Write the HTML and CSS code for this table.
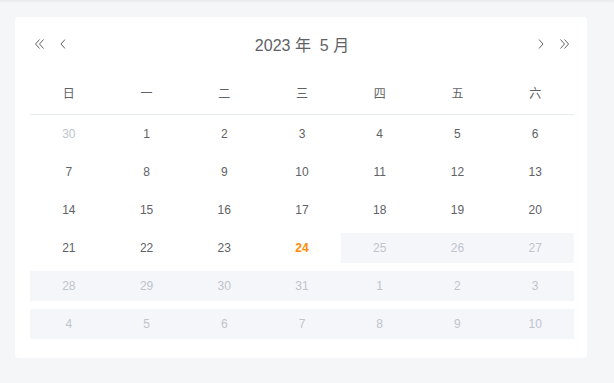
FILE: index.html
```html
<!DOCTYPE html>
<html lang="zh">
<head>
<meta charset="utf-8">
<link rel="stylesheet" href="styles.css">
</head>
<body>
<div class="shade"></div>
<div class="card">
  <div class="header">
    <div class="nav nav-left">
      <span class="btn"><svg width="10" height="10" viewBox="0 0 10 10"><path d="M4.5 0.5 L0.5 5 L4.5 9.5 M8.5 0.5 L4.5 5 L8.5 9.5" fill="none" stroke="#606266" stroke-width="1"/></svg></span>
      <span class="btn"><svg width="10" height="10" viewBox="0 0 10 10"><path d="M7 0.5 L3 5 L7 9.5" fill="none" stroke="#606266" stroke-width="1"/></svg></span>
    </div>
    <div class="title">2023 年&nbsp;&nbsp;5 月</div>
    <div class="nav nav-right">
      <span class="btn"><svg width="10" height="10" viewBox="0 0 10 10"><path d="M3 0.5 L7 5 L3 9.5" fill="none" stroke="#606266" stroke-width="1"/></svg></span>
      <span class="btn"><svg width="10" height="10" viewBox="0 0 10 10"><path d="M1.5 0.5 L5.5 5 L1.5 9.5 M5.5 0.5 L9.5 5 L5.5 9.5" fill="none" stroke="#606266" stroke-width="1"/></svg></span>
    </div>
  </div>
  <div class="week">
    <span>日</span><span>一</span><span>二</span><span>三</span><span>四</span><span>五</span><span>六</span>
  </div>
  <div class="row">
    <span class="cell prev">30</span><span class="cell">1</span><span class="cell">2</span><span class="cell">3</span><span class="cell">4</span><span class="cell">5</span><span class="cell">6</span>
  </div>
  <div class="row">
    <span class="cell">7</span><span class="cell">8</span><span class="cell">9</span><span class="cell">10</span><span class="cell">11</span><span class="cell">12</span><span class="cell">13</span>
  </div>
  <div class="row">
    <span class="cell">14</span><span class="cell">15</span><span class="cell">16</span><span class="cell">17</span><span class="cell">18</span><span class="cell">19</span><span class="cell">20</span>
  </div>
  <div class="row">
    <span class="cell">21</span><span class="cell">22</span><span class="cell">23</span><span class="cell today">24</span><span class="cell disabled">25</span><span class="cell disabled">26</span><span class="cell disabled">27</span>
  </div>
  <div class="row">
    <span class="cell disabled">28</span><span class="cell disabled">29</span><span class="cell disabled">30</span><span class="cell disabled">31</span><span class="cell disabled">1</span><span class="cell disabled">2</span><span class="cell disabled">3</span>
  </div>
  <div class="row">
    <span class="cell disabled">4</span><span class="cell disabled">5</span><span class="cell disabled">6</span><span class="cell disabled">7</span><span class="cell disabled">8</span><span class="cell disabled">9</span><span class="cell disabled">10</span>
  </div>
</div>
</body>
</html>
```

FILE: styles.css
```css
html, body {
  margin: 0;
  padding: 0;
}
body {
  background: #f5f6f8;
  font-family: "Liberation Sans", Arial, "Noto Sans CJK SC", sans-serif;
  color: #606266;
  width: 614px;
  height: 383px;
  overflow: hidden;
}
.shade {
  height: 3px;
  background: linear-gradient(#e6e8eb, #f5f6f8);
}
.card {
  width: 544px;
  margin: 14px 0 0 15px;
  padding: 15px 13px 15px 15px;
  background: #fff;
  border-radius: 4px;
}
.header {
  display: grid;
  grid-template-columns: 1fr auto 1fr;
  align-items: center;
  height: 22px;
  margin-bottom: 20px;
}
.nav {
  display: flex;
  align-items: center;
  gap: 13px;
}
.nav-left {
  padding-left: 5px;
}
.nav-right {
  justify-content: flex-end;
  padding-right: 5px;
}
.btn {
  width: 10px;
  height: 10px;
  display: flex;
}
.title {
  font-size: 16px;
  color: #606266;
  white-space: pre;
}
.week {
  display: grid;
  grid-template-columns: repeat(7, 1fr);
  height: 37px;
  padding-bottom: 3px;
  align-items: center;
  border-bottom: 1px solid #e6ebf2;
  font-family: "Noto Sans CJK SC", sans-serif;
  font-size: 12px;
  color: #606266;
}
.week span {
  text-align: center;
}
.row {
  display: grid;
  grid-template-columns: repeat(7, 1fr);
  padding: 4px 0;
}
.cell {
  height: 30px;
  display: flex;
  align-items: center;
  justify-content: center;
  font-size: 12px;
  color: #606266;
}
.cell.prev {
  color: #c0c4cc;
}
.cell.disabled {
  background: #f5f6fa;
  color: #c0c4cc;
}
.cell.today {
  color: #ff8c00;
  font-weight: bold;
}
```
